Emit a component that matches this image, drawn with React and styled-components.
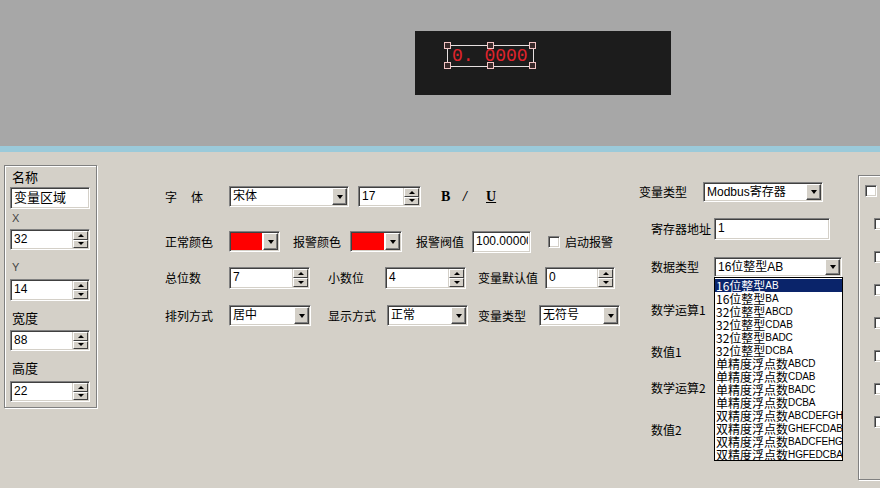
import React from "react";
import styled, { createGlobalStyle } from "styled-components";

const Global = createGlobalStyle`
  body {
    margin: 0;
    background: #d4d0c8;
    font-family: "Noto Sans CJK SC", "Liberation Sans", sans-serif;
    font-size: 12px;
    color: #000;
    overflow: hidden;
  }
`;

const Page = styled.div`
  width: 880px;
  height: 488px;
  overflow: hidden;
  background: #d4d0c8;
`;

const Canvas = styled.div`
  height: 146px;
  background: #a7a7a7;
  padding: 31px 0 0 415px;
  box-sizing: border-box;
`;

const Stage = styled.div`
  width: 256px;
  height: 64px;
  background: #1c1c1c;
  padding: 14px 0 0 32px;
  box-sizing: border-box;
`;

const Selection = styled.div`
  position: relative;
  width: 87px;
  height: 22px;
  border: 1px solid #e6e0e0;
  box-sizing: border-box;
  font-family: "Liberation Mono", monospace;
  font-size: 18px;
  line-height: 21px;
  color: #e0242c;
  padding-left: 4px;
  white-space: pre;
`;

const Handle = styled.span`
  position: absolute;
  width: 5px;
  height: 5px;
  border: 1px solid #f2c4c4;
  background: #3a2a2a;
  left: ${(p) => p.x}px;
  top: ${(p) => p.y}px;
`;

const Strip = styled.div`
  height: 6px;
  background: #9bcada;
`;

const Body = styled.div`
  display: flex;
  align-items: flex-start;
  height: 336px;
`;

const GroupBox = styled.div`
  margin: ${(p) => p.mt}px 0 0 ${(p) => p.ml}px;
  width: ${(p) => p.w}px;
  height: ${(p) => p.h}px;
  flex-shrink: 0;
  box-sizing: border-box;
  border: 1px solid #808080;
  box-shadow: 1px 1px 0 #fff, inset 1px 1px 0 #fff;
  padding: ${(p) => p.pad};
  display: flex;
  flex-direction: column;
`;

const FieldLabel = styled.div`
  margin-top: ${(p) => p.mt}px;
  height: 14px;
  line-height: 14px;
  font-size: ${(p) => (p.latin ? 11 : 13)}px;
  font-family: ${(p) =>
    p.latin ? '"Liberation Sans", sans-serif' : '"Noto Sans CJK SC", sans-serif'};
  color: ${(p) => (p.latin ? "#444" : "#000")};
  padding-left: 2px;
`;

const Sunken = styled.div`
  display: flex;
  align-items: stretch;
  width: ${(p) => p.w}px;
  height: ${(p) => p.h}px;
  margin-top: ${(p) => p.mt || 0}px;
  flex-shrink: 0;
  box-sizing: border-box;
  border: 1px solid;
  border-color: #808080 #fff #fff #808080;
  box-shadow: inset 1px 1px 0 #404040, inset -1px -1px 0 #d4d0c8;
  background: #fff;
  padding: 2px;
`;

const Value = styled.div`
  flex: 1;
  overflow: hidden;
  white-space: nowrap;
  font-family: "Liberation Sans", "Noto Sans CJK SC", sans-serif;
  font-size: ${(p) => p.size || 12}px;
  line-height: ${(p) => p.lh || 15}px;
  padding-left: 1px;
`;

const Swatch = styled.div`
  flex: 1;
  background: #ff0000;
  margin: -1px 1px -1px -1px;
`;

const DropButton = styled.div`
  width: 15px;
  flex-shrink: 0;
  margin: -1px -1px -1px 0;
  box-sizing: border-box;
  background: #d4d0c8;
  border: 1px solid;
  border-color: #fff #404040 #404040 #fff;
  box-shadow: inset -1px -1px 0 #808080;
  display: flex;
  align-items: center;
  justify-content: center;
`;

const Arrow = styled.span`
  width: 0;
  height: 0;
  border-left: ${(p) => p.s || 3.5}px solid transparent;
  border-right: ${(p) => p.s || 3.5}px solid transparent;
  ${(p) =>
    p.up
      ? `border-bottom: ${p.s ? p.s : 4}px solid #000;`
      : `border-top: ${p.s ? p.s : 4}px solid #000;`}
`;

const SpinCol = styled.div`
  width: 15px;
  flex-shrink: 0;
  margin: -1px -1px -1px 0;
  display: flex;
  flex-direction: column;
  border-left: 1px solid #d4d0c8;
`;

const SpinBtn = styled.div`
  flex: 1;
  box-sizing: border-box;
  background: #d4d0c8;
  border: 1px solid;
  border-color: #fff #404040 #404040 #fff;
  display: flex;
  align-items: center;
  justify-content: center;
`;

const Middle = styled.div`
  margin-left: 68px;
  width: 474px;
  flex-shrink: 0;
  padding-top: 34px;
`;

const Row = styled.div`
  display: flex;
  align-items: center;
  height: ${(p) => p.h || 21}px;
  margin-top: ${(p) => p.mt || 0}px;
`;

const Label = styled.div`
  width: ${(p) => p.w}px;
  flex-shrink: 0;
  font-size: ${(p) => p.size || 12}px;
  line-height: 14px;
  white-space: nowrap;
  letter-spacing: ${(p) => p.ls || 0}px;
`;

const Gap = styled.div`
  width: ${(p) => p.w}px;
  flex-shrink: 0;
`;

const StyleBtn = styled.span`
  width: ${(p) => p.w}px;
  flex-shrink: 0;
  font-family: "Liberation Serif", serif;
  font-weight: bold;
  font-size: 14px;
  font-style: ${(p) => (p.italic ? "italic" : "normal")};
  text-decoration: ${(p) => (p.under ? "underline" : "none")};
`;

const Check = styled.span`
  width: 12px;
  height: 12px;
  flex-shrink: 0;
  box-sizing: border-box;
  border: 1px solid;
  border-color: #808080 #fff #fff #808080;
  box-shadow: inset 1px 1px 0 #404040, inset -1px -1px 0 #d4d0c8;
  background: #fff;
  display: block;
  margin-left: ${(p) => p.ml || 0}px;
  margin-top: ${(p) => p.mt || 0}px;
`;

const Right = styled.div`
  width: 219px;
  flex-shrink: 0;
  padding-top: 30px;
`;

const ComboWrap = styled.div`
  position: relative;
`;

const ListBox = styled.div`
  position: absolute;
  left: 0;
  top: 100%;
  width: 129px;
  height: 184px;
  box-sizing: border-box;
  border: 1px solid #000;
  background: #fff;
  z-index: 2;
  padding-top: 1px;
`;

const ListItem = styled.div`
  display: flex;
  align-items: center;
  height: 13px;
  font-size: 12px;
  line-height: 13px;
  padding-left: 1px;
  white-space: nowrap;
  overflow: hidden;
  font-family: "Noto Sans CJK SC", sans-serif;
  background: ${(p) => (p.active ? "#0a246a" : "transparent")};
  color: ${(p) => (p.active ? "#fff" : "#000")};
`;

const Latin = styled.span`
  font-family: "Liberation Sans", sans-serif;
  font-size: 10px;
  line-height: 13px;
  letter-spacing: -0.1px;
`;

const Combo = ({ w, h = 21, text, mt }) => (
  <Sunken w={w} h={h} mt={mt}>
    <Value>{text}</Value>
    <DropButton>
      <Arrow />
    </DropButton>
  </Sunken>
);

const Spin = ({ w, h = 21, text, mt }) => (
  <Sunken w={w} h={h} mt={mt}>
    <Value>{text}</Value>
    <SpinCol>
      <SpinBtn>
        <Arrow up s={3} />
      </SpinBtn>
      <SpinBtn>
        <Arrow s={3} />
      </SpinBtn>
    </SpinCol>
  </Sunken>
);

const ColorCombo = ({ w }) => (
  <Sunken w={w} h={21}>
    <Swatch />
    <DropButton>
      <Arrow />
    </DropButton>
  </Sunken>
);

const dataTypes = [
  ["16位整型", "AB"],
  ["16位整型", "BA"],
  ["32位整型", "ABCD"],
  ["32位整型", "CDAB"],
  ["32位整型", "BADC"],
  ["32位整型", "DCBA"],
  ["单精度浮点数", "ABCD"],
  ["单精度浮点数", "CDAB"],
  ["单精度浮点数", "BADC"],
  ["单精度浮点数", "DCBA"],
  ["双精度浮点数", "ABCDEFGH"],
  ["双精度浮点数", "GHEFCDAB"],
  ["双精度浮点数", "BADCFEHG"],
  ["双精度浮点数", "HGFEDCBA"],
];

const sideChecks = [0, 1, 2, 3, 4, 5, 6];

export default function App() {
  return (
    <Page>
      <Global />
      <Canvas>
        <Stage>
          <Selection>
            {"0. 0000"}
            <Handle x={-4} y={-4} />
            <Handle x={39} y={-4} />
            <Handle x={81} y={-4} />
            <Handle x={-4} y={16} />
            <Handle x={39} y={16} />
            <Handle x={81} y={16} />
          </Selection>
        </Stage>
      </Canvas>
      <Strip />
      <Body>
        <GroupBox mt={13} ml={4} w={93} h={243} pad="4px 6px 0 5px">
          <FieldLabel mt={0}>名称</FieldLabel>
          <Sunken w={80} h={22} mt={3}>
            <Value size={13} lh={16}>变量区域</Value>
          </Sunken>
          <FieldLabel mt={2} latin>X</FieldLabel>
          <Spin w={80} text="32" mt={4} />
          <FieldLabel mt={10} latin>Y</FieldLabel>
          <Spin w={80} h={22} text="14" mt={5} />
          <FieldLabel mt={10}>宽度</FieldLabel>
          <Spin w={80} text="88" mt={5} />
          <FieldLabel mt={10}>高度</FieldLabel>
          <Spin w={80} text="22" mt={6} />
        </GroupBox>

        <Middle>
          <Row>
            <Label w={64} ls={1}>字　体</Label>
            <Combo w={120} text="宋体" />
            <Gap w={9} />
            <Spin w={63} text="17" />
            <Gap w={20} />
            <StyleBtn w={22}>B</StyleBtn>
            <StyleBtn w={23} italic>/</StyleBtn>
            <StyleBtn w={20} under>U</StyleBtn>
          </Row>
          <Row mt={24}>
            <Label w={64}>正常颜色</Label>
            <ColorCombo w={51} />
            <Gap w={13} />
            <Label w={57}>报警颜色</Label>
            <ColorCombo w={52} />
            <Gap w={14} />
            <Label w={56}>报警阀值</Label>
            <Sunken w={59} h={22}>
              <Value>100.000000</Value>
            </Sunken>
            <Gap w={17} />
            <Check />
            <Gap w={5} />
            <Label w={60}>启动报警</Label>
          </Row>
          <Row mt={15} h={22}>
            <Label w={64}>总位数</Label>
            <Spin w={81} h={22} text="7" />
            <Gap w={18} />
            <Label w={57}>小数位</Label>
            <Spin w={81} h={22} text="4" />
            <Gap w={12} />
            <Label w={67}>变量默认值</Label>
            <Spin w={70} h={22} text="0" />
          </Row>
          <Row mt={16}>
            <Label w={64}>排列方式</Label>
            <Combo w={82} text="居中" />
            <Gap w={17} />
            <Label w={59}>显示方式</Label>
            <Combo w={81} text="正常" />
            <Gap w={10} />
            <Label w={61}>变量类型</Label>
            <Combo w={81} text="无符号" />
          </Row>
        </Middle>

        <Right>
          <Row h={20}>
            <Label w={64}>变量类型</Label>
            <Combo w={120} h={20} text="Modbus寄存器" />
          </Row>
          <Row mt={16} h={22}>
            <Gap w={12} />
            <Label w={63}>寄存器地址</Label>
            <Sunken w={116} h={22}>
              <Value>1</Value>
            </Sunken>
          </Row>
          <Row mt={17} h={20}>
            <Gap w={12} />
            <Label w={63}>数据类型</Label>
            <ComboWrap>
              <Combo w={128} h={20} text="16位整型AB" />
              <ListBox>
                {dataTypes.map(([zh, code], i) => (
                  <ListItem key={zh + code} active={i === 0}>
                    {zh}
                    <Latin>{code}</Latin>
                  </ListItem>
                ))}
              </ListBox>
            </ComboWrap>
          </Row>
          <Row mt={26} h={14}>
            <Gap w={12} />
            <Label w={70}>数学运算1</Label>
          </Row>
          <Row mt={28} h={14}>
            <Gap w={12} />
            <Label w={70}>数值1</Label>
          </Row>
          <Row mt={22} h={14}>
            <Gap w={12} />
            <Label w={70}>数学运算2</Label>
          </Row>
          <Row mt={28} h={14}>
            <Gap w={12} />
            <Label w={70}>数值2</Label>
          </Row>
        </Right>

        <GroupBox mt={23} ml={0} w={40} h={305} pad="9px 0 0 6px">
          <Check />
          {sideChecks.map((i) => (
            <Check key={i} ml={9} mt={21} />
          ))}
        </GroupBox>
      </Body>
    </Page>
  );
}
